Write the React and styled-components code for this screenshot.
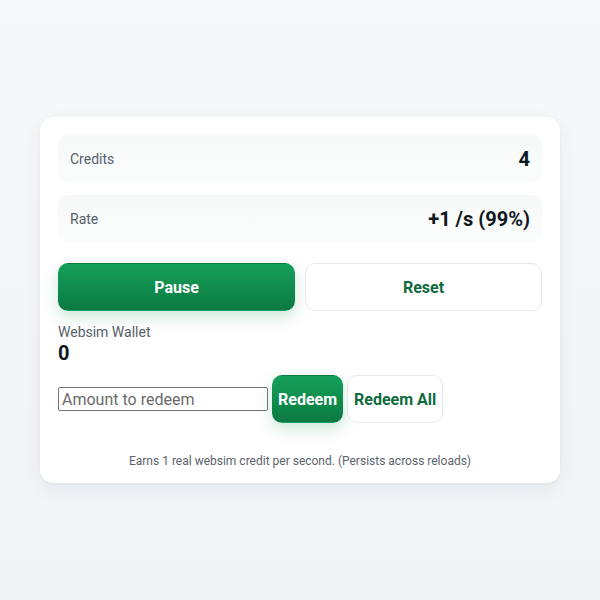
import styled, { createGlobalStyle } from 'styled-components';

const Global = createGlobalStyle`
  html, body { margin: 0; padding: 0; }
  body {
    background: linear-gradient(180deg, #f7f8f9 0%, #f1f3f5 100%);
    font-family: Roboto, "Liberation Sans", sans-serif;
    min-height: 600px;
  }
`;

const Page = styled.div`
  width: 600px;
  height: 600px;
  display: flex;
  justify-content: center;
  padding-top: 117px;
  box-sizing: border-box;
`;

const Card = styled.div`
  width: 520px;
  height: 366px;
  box-sizing: border-box;
  background: #fff;
  border-radius: 14px;
  box-shadow: 0 6px 20px rgba(20, 40, 60, 0.06), 0 1px 3px rgba(20, 40, 60, 0.04);
  padding: 18px 18px 0;
  display: flex;
  flex-direction: column;
`;

const Stat = styled.div`
  height: 48px;
  display: flex;
  align-items: center;
  justify-content: space-between;
  padding: 0 12px;
  border-radius: 10px;
  background: linear-gradient(180deg, #f7f9f8 0%, #fbfcfc 100%);
  margin-bottom: 12px;
`;

const Label = styled.span`
  font-size: 14px;
  color: #56606a;
`;

const Value = styled.span`
  font-size: 20px;
  font-weight: 700;
  color: #0f1720;
`;

const Controls = styled.div`
  display: grid;
  grid-template-columns: 1fr 1fr;
  gap: 10px;
  margin-top: 8px;
`;

const Button = styled.button`
  height: 48px;
  border-radius: 10px;
  font-family: Roboto, "Liberation Sans", sans-serif;
  font-size: 16px;
  font-weight: 700;
  cursor: pointer;
  padding: 0 ${p => p.$pad || 0}px;
  border: 1px solid ${p => (p.$primary ? 'transparent' : '#e6eaed')};
  color: ${p => (p.$primary ? '#fff' : '#0f6b3e')};
  background: ${p => (p.$primary ? 'linear-gradient(180deg, #15a05a 0%, #0b7a43 100%)' : '#fff')};
  box-shadow: ${p => (p.$primary ? '0 6px 16px rgba(16, 150, 80, 0.22)' : 'none')};
`;

const Wallet = styled.div`
  margin-top: 12px;
  display: flex;
  flex-direction: column;
`;

const WalletLabel = styled.span`
  font-size: 14px;
  color: #56606a;
  line-height: 18px;
`;

const WalletValue = styled.span`
  font-size: 20px;
  font-weight: 700;
  color: #0f1720;
  line-height: 24px;
`;

const RedeemRow = styled.div`
  display: flex;
  align-items: center;
  gap: 4px;
  margin-top: 10px;
`;

const Input = styled.input`
  width: 210px;
  height: 24px;
  box-sizing: border-box;
  border: 1px solid #767676;
  border-radius: 2px;
  padding: 1px 3px;
  font-family: Roboto, "Liberation Sans", sans-serif;
  font-size: 16px;
  &::placeholder { color: #6b6b6b; }
`;

const Footer = styled.p`
  margin: 31px 0 0;
  text-align: center;
  font-size: 12px;
  color: #5b636b;
`;

export default function App() {
  return (
    <>
      <Global />
      <Page>
        <Card>
          <Stat>
            <Label>Credits</Label>
            <Value>4</Value>
          </Stat>
          <Stat>
            <Label>Rate</Label>
            <Value>+1 /s (99%)</Value>
          </Stat>
          <Controls>
            <Button $primary>Pause</Button>
            <Button>Reset</Button>
          </Controls>
          <Wallet>
            <WalletLabel>Websim Wallet</WalletLabel>
            <WalletValue>0</WalletValue>
          </Wallet>
          <RedeemRow>
            <Input placeholder="Amount to redeem" />
            <Button $primary $pad={5}>Redeem</Button>
            <Button $pad={6}>Redeem All</Button>
          </RedeemRow>
          <Footer>Earns 1 real websim credit per second. (Persists across reloads)</Footer>
        </Card>
      </Page>
    </>
  );
}
